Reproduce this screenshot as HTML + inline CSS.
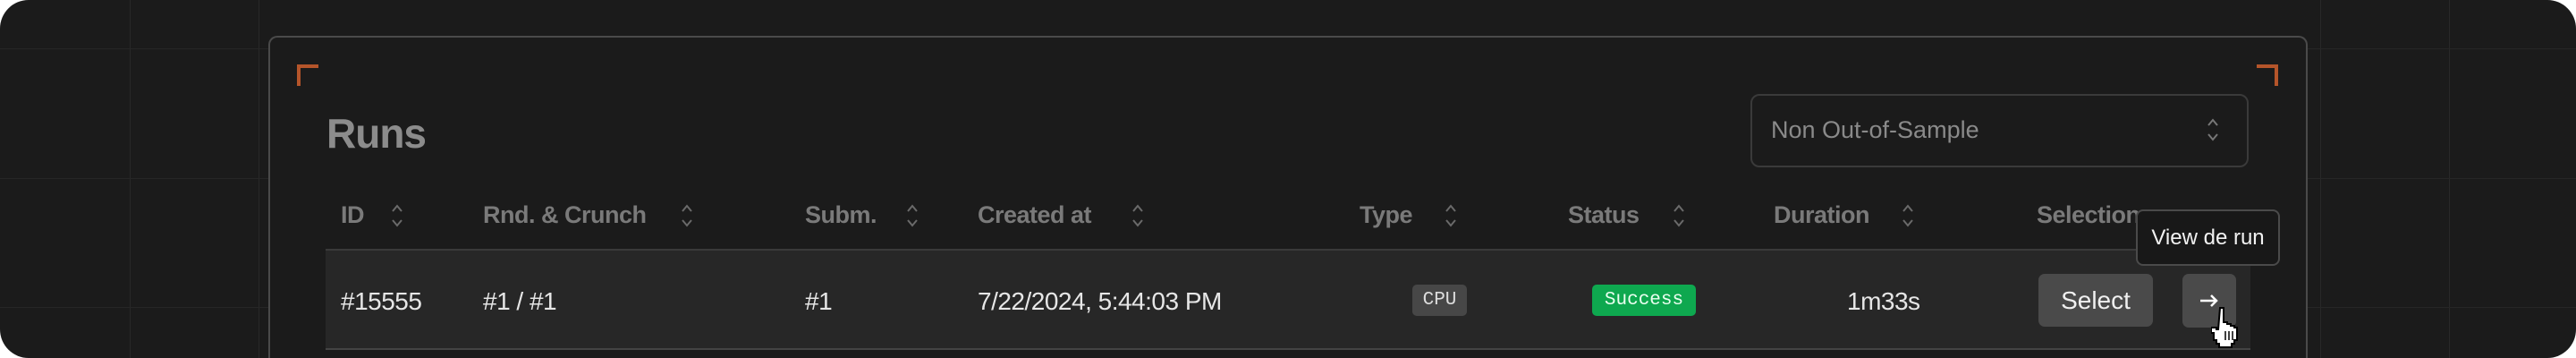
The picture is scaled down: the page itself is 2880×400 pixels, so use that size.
<!DOCTYPE html>
<html><head><meta charset="utf-8"><style>
*{margin:0;padding:0;box-sizing:border-box}
html,body{width:2880px;height:400px;background:#fff;overflow:hidden}
body{font-family:"Liberation Sans",sans-serif}
#wrap{position:absolute;left:0;top:0;width:2880px;height:400px;background:#1b1b1b;border-radius:32px;overflow:hidden}
.vl{position:absolute;top:0;width:1px;height:400px;background:#282828}
.hl{position:absolute;left:0;height:1px;width:2880px;background:#262626}
#card{position:absolute;left:300px;top:40px;width:2280px;height:360px;border:2px solid #4a4a4a;border-bottom:none;border-radius:10px 10px 0 0;background:#1b1b1b}
.br{position:absolute;width:24px;height:24px;border-color:#b5552a;border-style:solid;border-width:0}
.t{position:absolute;white-space:nowrap}
.h{font-weight:bold;font-size:27px;color:#7a7a7a;top:225px;letter-spacing:-0.5px}
.c{font-size:28px;color:#e6e6e6;top:321px;letter-spacing:-0.5px}
.s{position:absolute;top:226px}
</style></head><body>
<div id="wrap">
<div class="vl" style="left:145px"></div><div class="vl" style="left:289px"></div>
<div class="vl" style="left:2594px"></div><div class="vl" style="left:2738px"></div>
<div class="hl" style="top:54px"></div><div class="hl" style="top:199px"></div><div class="hl" style="top:343px"></div>
<div id="card"></div>
<div class="br" style="left:332px;top:72px;border-left-width:4px;border-top-width:4px"></div>
<div class="br" style="left:2523px;top:72px;border-right-width:4px;border-top-width:4px"></div>
<div class="t" style="left:365px;top:122px;font-size:46px;font-weight:bold;color:#8c8c8c;letter-spacing:-1px">Runs</div>
<div style="position:absolute;left:1957px;top:105px;width:557px;height:82px;border:2px solid #3a3a3a;border-radius:10px"></div>
<div class="t" style="left:1980px;top:130px;font-size:27px;color:#8a8a8a">Non Out-of-Sample</div>
<svg style="position:absolute;left:2466px;top:130px" width="16" height="30" viewBox="0 0 16 30"><path d="M3 10 L8 4 L13 10 M3 20 L8 26 L13 20" stroke="#777" stroke-width="2" fill="none"/></svg>

<div class="t h" style="left:381px">ID</div>
<div class="t h" style="left:540px">Rnd. &amp; Crunch</div>
<div class="t h" style="left:900px">Subm.</div>
<div class="t h" style="left:1093px">Created at</div>
<div class="t h" style="left:1520px">Type</div>
<div class="t h" style="left:1753px">Status</div>
<div class="t h" style="left:1983px">Duration</div>
<div class="t h" style="left:2277px">Selection</div>
<svg class="s" style="left:436px" width="16" height="30" viewBox="0 0 16 30"><path d="M3 10 L8 4 L13 10 M3 20 L8 26 L13 20" stroke="#6a6a6a" stroke-width="2" fill="none"/></svg>
<svg class="s" style="left:760px" width="16" height="30" viewBox="0 0 16 30"><path d="M3 10 L8 4 L13 10 M3 20 L8 26 L13 20" stroke="#6a6a6a" stroke-width="2" fill="none"/></svg>
<svg class="s" style="left:1012px" width="16" height="30" viewBox="0 0 16 30"><path d="M3 10 L8 4 L13 10 M3 20 L8 26 L13 20" stroke="#6a6a6a" stroke-width="2" fill="none"/></svg>
<svg class="s" style="left:1264px" width="16" height="30" viewBox="0 0 16 30"><path d="M3 10 L8 4 L13 10 M3 20 L8 26 L13 20" stroke="#6a6a6a" stroke-width="2" fill="none"/></svg>
<svg class="s" style="left:1614px" width="16" height="30" viewBox="0 0 16 30"><path d="M3 10 L8 4 L13 10 M3 20 L8 26 L13 20" stroke="#6a6a6a" stroke-width="2" fill="none"/></svg>
<svg class="s" style="left:1869px" width="16" height="30" viewBox="0 0 16 30"><path d="M3 10 L8 4 L13 10 M3 20 L8 26 L13 20" stroke="#6a6a6a" stroke-width="2" fill="none"/></svg>
<svg class="s" style="left:2125px" width="16" height="30" viewBox="0 0 16 30"><path d="M3 10 L8 4 L13 10 M3 20 L8 26 L13 20" stroke="#6a6a6a" stroke-width="2" fill="none"/></svg>

<div style="position:absolute;left:364px;top:278px;width:2152px;height:113px;background:#272727;border-top:2px solid #3a3a3a;border-bottom:2px solid #444"></div>
<div class="t c" style="left:381px">#15555</div>
<div class="t c" style="left:540px">#1 / #1</div>
<div class="t c" style="left:900px">#1</div>
<div class="t c" style="left:1093px">7/22/2024, 5:44:03 PM</div>
<div class="t" style="left:1579px;top:318px;width:61px;height:35px;background:#474747;border-radius:5px;color:#ddd;font:21px 'Liberation Mono',monospace;line-height:35px;text-align:center">CPU</div>
<div class="t" style="left:1780px;top:318px;width:116px;height:35px;background:#0ea84f;border-radius:5px;color:#eafff0;font:21px 'Liberation Mono',monospace;line-height:35px;text-align:center">Success</div>
<div class="t c" style="left:2065px">1m33s</div>
<div class="t" style="left:2279px;top:306px;width:128px;height:59px;background:#4a4a4a;border-radius:7px;color:#f0f0f0;font-size:28px;line-height:59px;text-align:center">Select</div>
<div class="t" style="left:2440px;top:306px;width:60px;height:60px;background:#4a4a4a;border-radius:7px"></div>
<svg style="position:absolute;left:2458px;top:326px" width="24" height="20" viewBox="0 0 24 20"><path d="M2 10 H20 M14 4 L20 10 L14 16" stroke="#fff" stroke-width="2.5" fill="none"/></svg>
<svg style="position:absolute;left:2472px;top:342px" width="34" height="50" viewBox="0 0 34 50"><path d="M10 2 h4 v16 h4 v2 h4 v2 h4 v2 h3 v14 h-3 v4 h-3 v4 h-14 v-4 h-3 v-4 h-3 v-8 h-3 v-6 h6 v2 h2 z" fill="#fff" stroke="#000" stroke-width="2"/><path d="M16 28 v10 M20 28 v10 M24 28 v10" stroke="#000" stroke-width="1.5"/></svg>
<div class="t" style="left:2388px;top:234px;width:161px;height:63px;background:#181818;border:2px solid #4a4a4a;border-radius:8px;color:#f2f2f2;font-size:24px;line-height:59px;text-align:center">View de run</div>
</div>
</body></html>
